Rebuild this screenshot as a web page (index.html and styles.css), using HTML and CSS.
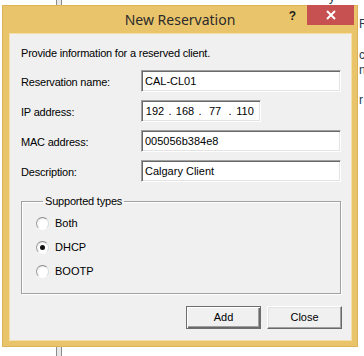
FILE: index.html
```html
<!DOCTYPE html>
<html lang="en">
	<head>
		<meta charset="UTF-8" />
		<meta name="viewport" content="width=device-width, initial-scale=1.0" />
		<title>New Reservation</title>
		<link rel="stylesheet" href="styles.css">
	</head>
	<body>
		<div class="desktop">
			<!-- page behind the dialog -->
			<div class="behind">
				<div class="stub stub_top"></div>
				<div class="stub stub_bottom"></div>
				<span class="peek peek_y">y</span>
				<span class="peek peek_r">R</span>
				<span class="peek peek_c">c</span>
				<span class="peek peek_n">n</span>
				<span class="peek peek_m">r</span>
			</div>

			<div class="window">
				<div class="titlebar">
					<span></span>
					<span class="title">New Reservation</span>
					<div class="caption_btns">
						<span class="help">?</span>
						<a href="javascript:;" class="close_btn">
							<svg width="10" height="10" viewBox="0 0 10 10">
								<path d="M1 1L9 9M9 1L1 9" stroke="#fff" stroke-width="2" fill="none" />
							</svg>
						</a>
					</div>
				</div>

				<div class="client">
					<p class="intro">Provide information for a reserved client.</p>

					<div class="form">
						<label class="lbl">Reservation name:</label>
						<div class="textbox wide">CAL-CL01</div>

						<label class="lbl">IP address:</label>
						<div class="textbox ip">
							<span class="oct">192</span><span class="dot">.</span>
							<span class="oct">168</span><span class="dot">.</span>
							<span class="oct">77</span><span class="dot">.</span>
							<span class="oct">110</span>
						</div>

						<label class="lbl">MAC address:</label>
						<div class="textbox wide">005056b384e8</div>

						<label class="lbl">Description:</label>
						<div class="textbox wide">Calgary Client</div>
					</div>

					<fieldset class="group">
						<legend>Supported types</legend>
						<div class="radio_row"><span class="radio"></span>Both</div>
						<div class="radio_row"><span class="radio checked"></span>DHCP</div>
						<div class="radio_row"><span class="radio"></span>BOOTP</div>
					</fieldset>

					<div class="buttons">
						<a href="javascript:;" class="btn default">Add</a>
						<a href="javascript:;" class="btn">Close</a>
					</div>
				</div>
			</div>
		</div>
	</body>
</html>
```

FILE: styles.css
```css
* {
	margin: 0;
	padding: 0;
	box-sizing: border-box;
}
body {
	background: #fff;
	font-family: "Liberation Sans", Arial, sans-serif;
	font-size: 11px;
	color: #000;
}
a {
	text-decoration: none;
	color: #000;
}

.desktop {
	width: 364px;
	height: 356px;
	position: relative;
	overflow: hidden;
}

/* stuff behind the dialog */
.behind {
	width: 100%;
	height: 100%;
}
.stub {
	position: absolute;
	left: 56px;
	width: 6px;
	border-left: 1px solid #8c8c8c;
	border-right: 1px solid #8c8c8c;
	background: #e6e6e6;
}
.stub_top {
	top: 0;
	height: 6px;
}
.stub_bottom {
	top: 346px;
	height: 10px;
}
.peek {
	position: absolute;
	left: 359px;
	font-size: 12px;
	line-height: 12px;
	color: #2a3a4a;
}
.peek_y {
	left: 329px;
	top: -9px;
}
.peek_r {
	top: 18px;
}
.peek_c {
	top: 49px;
}
.peek_n {
	top: 64px;
}
.peek_m {
	top: 94px;
}

/* dialog */
.window {
	position: absolute;
	left: 2px;
	top: 5px;
	width: 356px;
	height: 342px;
	background: #e9c46b;
	border: 1px solid #dcb257;
	padding: 0 5px 5px 6px;
}

.titlebar {
	height: 27px;
	margin: 0 -5px 0 -6px;
	display: grid;
	grid-template-columns: 1fr auto 1fr;
}
.title {
	font-family: "Noto Sans", "Open Sans", sans-serif;
	font-size: 14px;
	line-height: 27px;
	color: #2b2b2b;
}
.caption_btns {
	display: flex;
	justify-content: flex-end;
	align-items: flex-start;
	padding-right: 3px;
}
.help {
	font-family: "Liberation Sans", sans-serif;
	font-weight: bold;
	font-size: 12px;
	line-height: 20px;
	color: #1e1e1e;
	margin: 0 11px 0 0;
}
.close_btn {
	width: 47px;
	height: 20px;
	margin-top: -1px;
	background: #c75050;
	display: flex;
	align-items: center;
	justify-content: center;
}

.client {
	height: 308px;
	background: #f0f0f0;
	border: 1px solid #f4dfa8;
	padding: 13px 10px 0 11px;
}

.intro {
	line-height: 13px;
	letter-spacing: -0.2px;
}

.form {
	margin-top: 10px;
	display: grid;
	grid-template-columns: 120px 1fr;
	grid-auto-rows: 22px;
	row-gap: 8px;
}
.lbl {
	line-height: 13px;
	padding-top: 6px;
	letter-spacing: -0.2px;
}
.textbox {
	height: 22px;
	background: #fff;
	border-top: 1px solid #a0a0a0;
	border-left: 1px solid #a0a0a0;
	border-bottom: 1px solid #fff;
	border-right: 1px solid #fff;
	box-shadow: inset 1px 1px 0 #696969, inset -1px -1px 0 #e3e3e3;
	padding: 0 3px;
	line-height: 20px;
}
.wide {
	width: 200px;
}
.ip {
	width: 120px;
	display: flex;
	padding: 0 0 0 2px;
}
.oct {
	width: 22px;
	text-align: center;
}
.dot {
	width: 8px;
	text-align: center;
}

.group {
	margin-top: 13px;
	border: 1px solid #a0a0a0;
	box-shadow: inset 1px 1px 0 #fff, 1px 1px 0 #fff;
	padding: 7px 10px 14px 14px;
	display: flex;
	flex-direction: column;
	gap: 8px;
}
.group legend {
	margin-left: 7px;
	padding: 0 2px;
	line-height: 13px;
	letter-spacing: -0.2px;
}
.radio_row {
	height: 16px;
	display: flex;
	align-items: center;
	gap: 6px;
}
.radio {
	width: 13px;
	height: 13px;
	border-radius: 50%;
	border: 1px solid;
	border-color: #8a8a8a #dcdcdc #fff #9a9a9a;
	background: radial-gradient(circle at 60% 60%, #fff 45%, #e0e0e0 100%);
	display: flex;
	align-items: center;
	justify-content: center;
}
.radio.checked::after {
	content: "";
	width: 5px;
	height: 5px;
	border-radius: 50%;
	background: #111;
}

.buttons {
	margin: 12px -1px 0 0;
	display: flex;
	justify-content: flex-end;
	gap: 6px;
}
.btn {
	width: 75px;
	height: 23px;
	line-height: 20px;
	text-align: center;
	background: #f0f0f0;
	border: 1px solid;
	border-color: #fff #696969 #696969 #fff;
	box-shadow: inset -1px -1px 0 #a0a0a0, inset 1px 1px 0 #e3e3e3;
}
.btn.default {
	border-color: #6d6d6d;
	box-shadow: inset 1px 1px 0 #fff, inset -1px -1px 0 #696969, inset -2px -2px 0 #a0a0a0;
}
```
